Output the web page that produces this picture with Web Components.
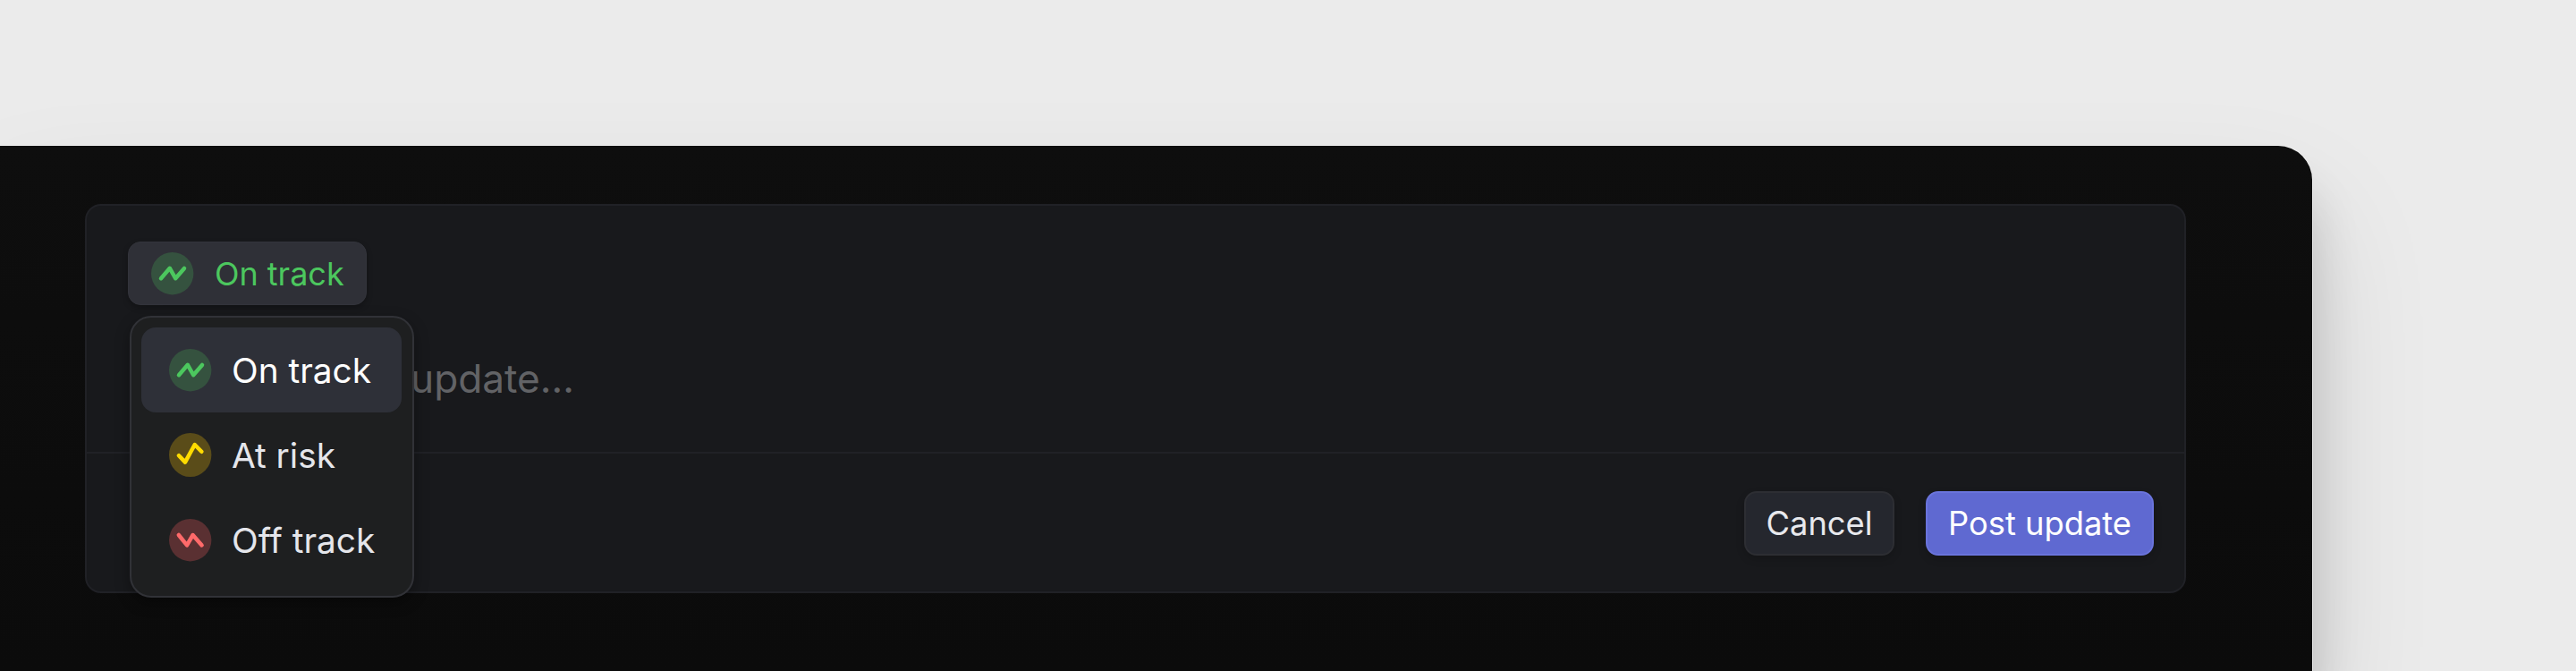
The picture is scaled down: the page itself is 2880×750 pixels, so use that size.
<!DOCTYPE html>
<html lang="en">
  <head>
    <meta charset="UTF-8" />
    <title>Project update</title>
    <style>
      body {
        margin: 0;
        width: 2880px;
        height: 750px;
        display: flow-root;
        overflow: hidden;
        background: #ebebeb;
        font-family: Inter, "Liberation Sans", sans-serif;
      }
    </style>
  </head>
  <body>
    <app-window>
      <update-composer>
        <status-picker slot="status">
          On track
          <status-menu slot="menu">
            <status-option selected><status-icon slot="icon" name="on-track"></status-icon>On track</status-option>
            <status-option><status-icon slot="icon" name="at-risk"></status-icon>At risk</status-option>
            <status-option><status-icon slot="icon" name="off-track"></status-icon>Off track</status-option>
          </status-menu>
        </status-picker>
        <span slot="text">update…</span>
        <action-button slot="actions">Cancel</action-button>
        <action-button slot="actions" primary>Post update</action-button>
      </update-composer>
    </app-window>

    <script>
      const define = (name, html, render) => {
        customElements.define(
          name,
          class extends HTMLElement {
            constructor() {
              super();
              this.attachShadow({ mode: "open" }).innerHTML = html;
            }
            connectedCallback() {
              if (render) render(this, this.shadowRoot);
            }
          }
        );
      };

      define(
        "app-window",
        `
        <style>
          :host {
            display: block;
            box-sizing: border-box;
            width: 2585px;
            height: 587px;
            margin-top: 163px;
            padding: 65px 0 0 95px;
            border-top-right-radius: 38px;
            background: linear-gradient(#0e0e0e, #0b0b0b);
            box-shadow:
              0 0 0 1px rgba(240, 240, 240, 0.75),
              0 50px 54px rgba(0, 0, 0, 0.16),
              0 76px 140px rgba(0, 0, 0, 0.12);
          }
        </style>
        <slot></slot>
      `
      );

      define(
        "update-composer",
        `
        <style>
          :host {
            display: flex;
            flex-direction: column;
            box-sizing: border-box;
            width: 2349px;
            height: 435px;
            border: 2px solid #202126;
            border-radius: 18px;
            background: #18191c;
          }
          .body {
            flex: none;
            box-sizing: border-box;
            height: 277px;
            padding: 40px 46px 0;
            border-bottom: 2px solid #202126;
          }
          .text {
            margin: 55px 0 0 316px;
            font-size: 44.2px;
            line-height: 54px;
            color: #626366;
          }
          .actions {
            display: flex;
            flex: 1;
            align-items: center;
            justify-content: flex-end;
            gap: 35px;
            padding: 1px 34px 0 0;
          }
        </style>
        <div class="body">
          <slot name="status"></slot>
          <div class="text"><slot name="text"></slot></div>
        </div>
        <div class="actions"><slot name="actions"></slot></div>
      `
      );

      // stroke, disc, line
      const icons = {
        "on-track": ["#4cc75e", "#35523f", "M11 29.2 20.8 17.8 27.2 29.2 37 18"],
        "at-risk": ["#ffdb00", "#5a4c19", "M11 25.2 18 32.6 28.7 13 36.3 20.8"],
        "off-track": ["#ff6a6a", "#5a3032", "M10.8 18 20 29.4 26.6 18 36.6 29.4"],
      };

      define(
        "status-icon",
        `
        <style>
          :host { display: block; flex: none; width: 47.4px; height: 47.4px; }
          :host([name="at-risk"]) { height: 49px; }
          svg { display: block; width: 100%; height: 100%; overflow: visible; }
        </style>
        <svg>
          <ellipse cx="50%" cy="50%" rx="50%" ry="50%" />
          <path fill="none" stroke-width="4.5" stroke-linecap="round" stroke-linejoin="round" />
        </svg>
      `,
        (el, root) => {
          const [color, background, d] = icons[el.getAttribute("name")];
          root.querySelector("ellipse").setAttribute("fill", background);
          const path = root.querySelector("path");
          path.setAttribute("stroke", color);
          path.setAttribute("d", d);
        }
      );

      define(
        "status-picker",
        `
        <style>
          :host { display: block; position: relative; width: 267px; }
          .pill {
            display: flex;
            align-items: center;
            gap: 23.5px;
            box-sizing: border-box;
            height: 71px;
            padding-left: 25px;
            border: 1px solid #33343b;
            border-radius: 14px;
            background: #2f3037;
            box-shadow: 0 3px 6px rgba(0, 0, 0, 0.25);
            color: #4cc75e;
            font-size: 36px;
            white-space: nowrap;
          }
          .menu { position: absolute; top: 83px; left: 2px; }
        </style>
        <div class="pill">
          <status-icon name="on-track"></status-icon>
          <span><slot></slot></span>
        </div>
        <div class="menu"><slot name="menu"></slot></div>
      `
      );

      define(
        "status-menu",
        `
        <style>
          :host {
            display: block;
            box-sizing: border-box;
            width: 318px;
            height: 315px;
            padding: 11px 12px 11px 11px;
            border: 2px solid #313237;
            border-radius: 24px;
            background: #1e1f20;
            box-shadow: 0 6px 16px rgba(0, 0, 0, 0.35);
          }
        </style>
        <slot></slot>
      `
      );

      define(
        "status-option",
        `
        <style>
          :host {
            display: flex;
            align-items: center;
            gap: 22.6px;
            box-sizing: border-box;
            height: 95px;
            padding-left: 31px;
            border-radius: 16px;
            color: #e5e6eb;
            font-size: 38.8px;
            white-space: nowrap;
          }
          :host([selected]) { background: #2e3038; color: #fff; }
        </style>
        <slot name="icon"></slot>
        <span><slot></slot></span>
      `
      );

      define(
        "action-button",
        `
        <style>
          :host {
            display: flex;
            align-items: center;
            justify-content: center;
            box-sizing: border-box;
            width: 168px;
            height: 72px;
            border: 2px solid #2d2e33;
            border-radius: 14px;
            background: #25272e;
            box-shadow: 0 4px 10px rgba(0, 0, 0, 0.16);
            color: #e8e9ed;
            font-size: 36.3px;
            white-space: nowrap;
          }
          :host([primary]) {
            width: 255px;
            border-color: #6a74dc;
            background: #5f69d1;
            color: #fff;
          }
        </style>
        <slot></slot>
      `
      );
    </script>
  </body>
</html>
